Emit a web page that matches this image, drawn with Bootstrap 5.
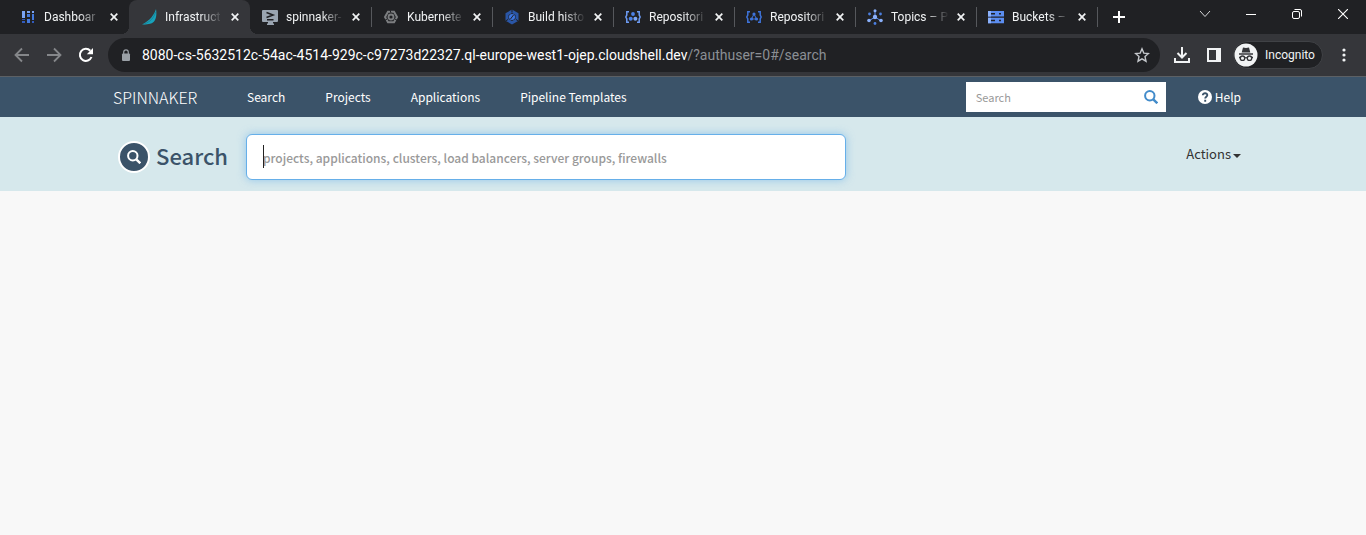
<!DOCTYPE html>
<html lang="en">
<head>
<meta charset="utf-8">
<meta name="viewport" content="width=device-width, initial-scale=1">
<title>Infrastructure Search</title>
<link href="https://cdn.jsdelivr.net/npm/bootstrap@5.3.0/dist/css/bootstrap.min.css" rel="stylesheet">
<style>
  body { background: #f8f8f8; font-family: "Noto Sans CJK JP", "Liberation Sans", sans-serif; font-size: 13px; line-height: 20px; }
  button { border: 0; background: none; padding: 0; color: inherit; }
  svg { display: block; flex: none; }

  /* browser frame */
  .chrome { font-family: Roboto, "Open Sans", sans-serif; font-size: 12px; line-height: 16px; color: #f1f3f4; background: #35363a; }
  .tab-strip { height: 34px; background: #202124; padding-left: 8px; }
  .tab-item { flex: 0 1 121px; min-width: 0; height: 34px; padding: 0 11px 0 12px; position: relative; }
  .tab-item:not(.current):not(.first)::after { content: ""; position: absolute; right: -1px; top: 7px; width: 1px; height: 20px; background: #56585c; }
  .tab-item.current { background: #35363a; border-radius: 8px 8px 0 0; }
  .tab-item.current::before, .tab-item.current::after { content: ""; position: absolute; bottom: 0; width: 8px; height: 8px; }
  .tab-item.current::before { left: -8px; background: radial-gradient(circle at 0 0, transparent 8px, #35363a 8px); }
  .tab-item.current::after { right: -8px; background: radial-gradient(circle at 100% 0, transparent 8px, #35363a 8px); }
  .tab-title { width: 58px; margin-left: 8px; overflow: hidden; white-space: nowrap; -webkit-mask-image: linear-gradient(90deg, #000 60%, transparent); mask-image: linear-gradient(90deg, #000 60%, transparent); }
  .window-btn { width: 46px; height: 28px; display: flex; align-items: center; justify-content: center; }
  .toolbar { height: 43px; border-bottom: 1px solid #5c6064; padding: 0 17px 0 14px; }
  .omnibox { height: 34px; border-radius: 17px; background: #202124; padding: 0 10px 0 12px; margin-left: 14px; }
  .address { font-size: 14px; line-height: 20px; color: #fff; margin-left: 10px; white-space: nowrap; overflow: hidden; }
  .address span { color: #8b8f94; }
  .tool-icons { gap: 16px; margin: 0 11px 0 14px; }
  .profile { min-width: 90px; height: 28px; border-radius: 14px; background: #202124; border: 1px solid #404246; gap: 7px; }

  /* application */
  .app-nav { background: #3b5369; min-height: 40px; color: #fff; }
  .app-nav a { color: #fff; text-decoration: none; white-space: nowrap; font-size: 12px; }
  .app-nav .app-brand { font-size: 16px; font-weight: 300; width: 134px; }
  .nav-links { gap: 40px; }
  .quick-search { width: 200px; height: 30px; background: #fff; padding: 0 8px 0 10px; color: #428bca; }
  .quick-search input { border: 0; outline: 0; min-width: 0; font-size: 11px; background: none; padding: 0; }
  .quick-search input::placeholder, .main-search input::placeholder { color: #999; opacity: 1; }
  .help-link { gap: 3px; margin: 0 12px 0 32px; }
  .app-header { background: #d6e8ec; padding: 17px 0 11px; }
  .page-title { width: 133px; padding: 7px 0 0 5px; gap: 6px; color: #3b5369; font-size: 22px; line-height: 28px; font-weight: 500; }
  .title-icon { width: 32px; height: 32px; border: 2px solid #fff; border-radius: 50%; background: #3b5369; }
  .main-search { position: relative; flex: 0 1 600px; }
  .main-search input { width: 100%; height: 46px; border: 1px solid #66afe9; border-radius: 6px; padding: 1px 16px; font-size: 12px; font-weight: 500; background: #fff; box-shadow: 0 0 8px rgba(102,175,233,.6); outline: 0; }
  .caret-line { position: absolute; left: 17px; top: 11px; width: 1px; height: 23px; background: #222; }
  .actions { color: #333; margin: 10px 12px 0 0; }
  .actions::after { margin-left: 2px; vertical-align: 1px; border-width: 4px 4px 0; }
</style>
</head>
<body>
<svg width="0" height="0" class="position-absolute" aria-hidden="true">
  <symbol id="x" viewBox="0 0 8 8"><path d="M.7.7l6.6 6.6M7.3.7L.7 7.3" stroke="#f1f3f4" stroke-width="1.7"/></symbol>
  <symbol id="lens" viewBox="0 0 14 14"><circle cx="5.8" cy="5.8" r="4.7" fill="none" stroke="currentColor" stroke-width="2"/><path d="M9.3 9.3l4 4" stroke="currentColor" stroke-width="2.4"/></symbol>
</svg>

<div class="chrome">
  <div class="tab-strip d-flex">
    <div class="tab-item first d-flex align-items-center">
      <svg width="16" height="16" viewBox="0 0 16 16"><path d="M2 2h3v7H2zM7 2h3v2H7zM12 2h2v2h-2z" fill="#7ba4f4"/><path d="M7 5h3v3H7zM7 10h3v4H7zM12 5h2v6h-2z" fill="#4479dd"/><path d="M2 10h3v1H2zM2 12h3v2H2zM12 12h2v2h-2z" fill="#315bbd"/></svg>
      <span class="tab-title">Dashboar</span><button class="ms-auto" aria-label="Close tab"><svg width="8" height="8"><use href="#x"/></svg></button>
    </div>
    <div class="tab-item current d-flex align-items-center">
      <svg width="16" height="16" viewBox="0 0 16 16"><path d="M15 0c1 6 0 11-3 13.500C10 15 6 15.500 1 15.500 6 13 12 9 15 0z" fill="#17a2bb"/><path d="M14.500 3C13 9 9 13 3 15" fill="none" stroke="#178499"/></svg>
      <span class="tab-title">Infrastruct</span><button class="ms-auto" aria-label="Close tab"><svg width="8" height="8"><use href="#x"/></svg></button>
    </div>
    <div class="tab-item d-flex align-items-center">
      <svg width="16" height="16" viewBox="0 0 16 16"><path d="M1 1h14a1 1 0 011 1v10a1 1 0 01-1 1h-4v1.500h1V16H5v-1.500h1V13H1a1 1 0 01-1-1V2a1 1 0 011-1z" fill="#9aa5b1"/><path d="M4.500 3.500L11 6 4.500 8.500M5 10.700h6.500" fill="none" stroke="#202124" stroke-width="1.600"/></svg>
      <span class="tab-title">spinnaker-</span><button class="ms-auto" aria-label="Close tab"><svg width="8" height="8"><use href="#x"/></svg></button>
    </div>
    <div class="tab-item d-flex align-items-center">
      <svg width="16" height="16" viewBox="0 0 16 16" fill="none" stroke="#7c7e80" stroke-width="2"><path d="M5 2.800h6L14 8l-3 5.200H5L2 8z"/><circle cx="8" cy="8" r="2.500" stroke-width="1.800"/><path d="M7 1l1 3M1 12l3-2M15 12l-3-2" stroke="#202124" stroke-width="1"/></svg>
      <span class="tab-title">Kubernete</span><button class="ms-auto" aria-label="Close tab"><svg width="8" height="8"><use href="#x"/></svg></button>
    </div>
    <div class="tab-item d-flex align-items-center">
      <svg width="16" height="16" viewBox="0 0 16 16"><path d="M8 .5l6.500 3.800v7.400L8 15.500l-6.500-3.800V4.300z" fill="#2a56a6"/><path d="M8 4l3.500 2v4L8 12l-3.500-2V6z" fill="#202124"/><path d="M8 0v3.500M1.500 12L4 10.500M14.500 12L12 10.500" stroke="#202124"/><circle cx="8" cy="8" r="3" fill="#3d75df"/><path d="M6.500 10l3-4" stroke="#202124"/></svg>
      <span class="tab-title">Build histo</span><button class="ms-auto" aria-label="Close tab"><svg width="8" height="8"><use href="#x"/></svg></button>
    </div>
    <div class="tab-item d-flex align-items-center">
      <svg width="16" height="16" viewBox="0 0 16 16"><path d="M4 2.700H1.800V6L.8 8l1 2v3.300H4M12 2.700h2.200V6l1 2-1 2v3.300H12" fill="none" stroke="#6d9cf5" stroke-width="1.500"/><circle cx="8" cy="5" r="1.900" fill="#4c82e8"/><circle cx="5.700" cy="9.800" r="2" fill="#4c82e8"/><circle cx="10.400" cy="9.800" r="2" fill="#7ba6f6"/></svg>
      <span class="tab-title">Repositori</span><button class="ms-auto" aria-label="Close tab"><svg width="8" height="8"><use href="#x"/></svg></button>
    </div>
    <div class="tab-item d-flex align-items-center">
      <svg width="16" height="16" viewBox="0 0 16 16" fill="none" stroke="#3e74dc" stroke-width="1.500"><path d="M4 2.700H1.800V6L.8 8l1 2v3.300H4M12 2.700h2.200V6l1 2-1 2v3.300H12"/><path d="M8 5l-2.500 5h5z" stroke-width="1"/><g fill="#3e74dc" stroke="none"><circle cx="8" cy="5" r="1.600"/><circle cx="5.500" cy="10" r="1.600"/><circle cx="10.500" cy="10" r="1.600"/></g></svg>
      <span class="tab-title">Repositori</span><button class="ms-auto" aria-label="Close tab"><svg width="8" height="8"><use href="#x"/></svg></button>
    </div>
    <div class="tab-item d-flex align-items-center">
      <svg width="16" height="16" viewBox="0 0 16 16"><path d="M8 8V2M8 8L2.500 11.500M8 8l5.500 3.500" stroke="#5d8ded"/><g fill="#8ab0fa"><circle cx="8" cy="8" r="2.200"/><circle cx="8" cy="1.700" r="1.500"/><circle cx="2" cy="11.500" r="1.800"/><circle cx="14" cy="11.500" r="1.800"/></g><g fill="#4b7fe0"><circle cx="2.500" cy="5" r="1.400"/><circle cx="13.500" cy="5" r="1.400"/><circle cx="8" cy="14.500" r="1.400"/></g></svg>
      <span class="tab-title">Topics – P</span><button class="ms-auto" aria-label="Close tab"><svg width="8" height="8"><use href="#x"/></svg></button>
    </div>
    <div class="tab-item d-flex align-items-center">
      <svg width="16" height="16" viewBox="0 0 16 16"><path d="M0 2h16v5.500H0zM0 8.800h16v5.500H0z" fill="#5b8def"/><path d="M0 2h3v5.500H0zM0 8.800h3v5.500H0z" fill="#8ab0fa"/><path d="M3 4.800h4M3 11.500h4M11 4.800h2M11 11.500h2" stroke="#202124" stroke-width="1.500"/></svg>
      <span class="tab-title">Buckets –</span><button class="ms-auto" aria-label="Close tab"><svg width="8" height="8"><use href="#x"/></svg></button>
    </div>
    <button class="ms-3" aria-label="New tab"><svg width="12" height="12" viewBox="0 0 12 12"><path d="M6 0v12M0 6h12" stroke="#fff" stroke-width="2"/></svg></button>
    <div class="d-flex ms-auto">
      <button class="window-btn" aria-label="Search tabs"><svg width="12" height="12" viewBox="0 0 12 12" fill="none" stroke="#d5d6d8"><path d="M1 3l5 5.500L11 3"/></svg></button>
      <button class="window-btn" aria-label="Minimize"><svg width="10" height="10" viewBox="0 0 10 10"><path d="M0 5.500h10" stroke="#fff"/></svg></button>
      <button class="window-btn" aria-label="Restore"><svg width="10" height="10" viewBox="0 0 10 10" fill="none" stroke="#fff"><rect x=".5" y="2.500" width="7" height="7" rx="1.500"/><path d="M2.500.5H8A1.500 1.500 0 019.500 2v5.500"/></svg></button>
      <button class="window-btn" aria-label="Close"><svg width="10" height="10" viewBox="0 0 10 10"><path d="M0 0l10 10M10 0L0 10" stroke="#fff" stroke-width="1.100"/></svg></button>
    </div>
  </div>

  <div class="toolbar d-flex align-items-center">
    <div class="d-flex gap-3">
      <button aria-label="Back"><svg width="16" height="16" viewBox="0 0 16 16" fill="none" stroke="#85878a" stroke-width="1.800"><path d="M15 8H2M8 1.500L1.500 8 8 14.500"/></svg></button>
      <button aria-label="Forward"><svg width="16" height="16" viewBox="0 0 16 16" fill="none" stroke="#85878a" stroke-width="1.800"><path d="M1 8h13M8 1.500L14.500 8 8 14.500"/></svg></button>
      <button aria-label="Reload"><svg width="16" height="16" viewBox="0 0 16 16"><path d="M13.500 10A6 6 0 1112.300 3.800" fill="none" stroke="#fff" stroke-width="2"/><path d="M15 1v6.200H8.800z" fill="#fff"/></svg></button>
    </div>
    <div class="omnibox d-flex align-items-center flex-grow-1 overflow-hidden">
      <svg width="12" height="12" viewBox="0 0 12 12"><rect x="2" y="4.500" width="8" height="7.500" rx="1" fill="#9aa0a6"/><path d="M3.700 5V3.200a2.300 2.300 0 014.600 0V5" fill="none" stroke="#9aa0a6" stroke-width="1.200"/></svg>
      <div class="address">8080-cs-5632512c-54ac-4514-929c-c97273d22327.ql-europe-west1-ojep.cloudshell.dev<span>/?authuser=0#/search</span></div>
      <button class="ms-auto" aria-label="Bookmark"><svg width="16" height="16" viewBox="0 0 16 16"><path d="M8 1.800l1.800 4.300 4.700.4-3.500 3.100 1 4.600L8 11.800l-4 2.400 1-4.600L1.500 6.500l4.700-.4z" fill="none" stroke="#c4c7cb" stroke-width="1.400"/></svg></button>
    </div>
    <div class="tool-icons d-flex">
      <button aria-label="Downloads"><svg width="16" height="16" viewBox="0 0 16 16" fill="none" stroke="#f1f3f4" stroke-width="2"><path d="M8 0v10M3.500 6L8 10.500 12.500 6M1 11v4h14v-4"/></svg></button>
      <button aria-label="Side panel"><svg width="16" height="16" viewBox="0 0 16 16"><path d="M2 2h12v12H2z" fill="none" stroke="#f1f3f4" stroke-width="2"/><path d="M10 2h4v12h-4z" fill="#f1f3f4"/></svg></button>
    </div>
    <button class="profile d-flex align-items-center" aria-label="Incognito profile">
      <svg width="24" height="24" viewBox="0 0 24 24"><circle cx="12" cy="12" r="11.500" fill="#f1f3f4"/><path d="M9 4.500l3 .6 3-.6 1.300 5H7.700zM5 10.200h14v1.500H5z" fill="#35363a"/><g fill="none" stroke="#35363a" stroke-width="1.300"><circle cx="8.500" cy="15.200" r="2.200"/><circle cx="15.500" cy="15.200" r="2.200"/><path d="M10.700 15q1.300-.8 2.600 0M5 14.500h1.500M17.500 14.500H19"/></g></svg>
      <span>Incognito</span>
    </button>
    <button class="ms-3" aria-label="Menu"><svg width="10" height="16" viewBox="0 0 10 16" fill="#f1f3f4"><circle cx="5" cy="3" r="1.600"/><circle cx="5" cy="8" r="1.600"/><circle cx="5" cy="13" r="1.600"/></svg></button>
  </div>
</div>

<nav class="app-nav d-flex align-items-center">
  <div class="container px-0 d-flex align-items-center">
    <a class="app-brand" href="#">SPINNAKER</a>
    <div class="nav-links d-flex">
      <a href="#search">Search</a>
      <a href="#projects">Projects</a>
      <a href="#applications">Applications</a>
      <a href="#templates">Pipeline Templates</a>
    </div>
    <div class="quick-search d-flex align-items-center ms-auto">
      <input class="flex-grow-1" type="text" placeholder="Search" aria-label="Quick search">
      <svg width="14" height="14"><use href="#lens"/></svg>
    </div>
    <a class="help-link d-flex align-items-center" href="#help">
      <svg width="14" height="14" viewBox="0 0 14 14"><circle cx="7" cy="7" r="7" fill="#fff"/><path d="M4.800 5.200C4.800 2.500 9.400 2.600 9.300 5.200 9.200 6.700 7.200 6.700 7.200 8.500M7.200 9.700v2" fill="none" stroke="#3b5369" stroke-width="1.900"/></svg>
      <span>Help</span>
    </a>
  </div>
</nav>

<header class="app-header">
  <div class="container px-0 d-flex align-items-start">
    <h1 class="page-title d-flex align-items-start m-0">
      <span class="title-icon d-flex align-items-center justify-content-center text-white"><svg width="14" height="14"><use href="#lens"/></svg></span>
      <span>Search</span>
    </h1>
    <div class="main-search">
      <input type="text" placeholder="projects, applications, clusters, load balancers, server groups, firewalls" aria-label="Search infrastructure">
      <span class="caret-line"></span>
    </div>
    <button class="actions dropdown-toggle ms-auto" type="button" data-bs-toggle="dropdown">Actions</button>
  </div>
</header>
<script src="https://cdn.jsdelivr.net/npm/bootstrap@5.3.0/dist/js/bootstrap.bundle.min.js"></script>
</body>
</html>
